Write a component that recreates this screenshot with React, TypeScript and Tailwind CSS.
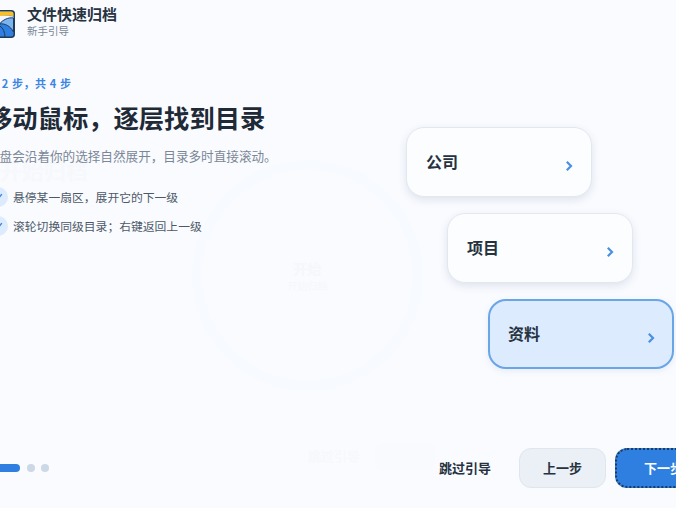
const font = { fontFamily: '"Noto Sans CJK SC", "Noto Sans", sans-serif' };

function Logo() {
  return (
    <svg width="28" height="28" viewBox="0 0 28 28" className="shrink-0">
      <rect x="0.75" y="0.75" width="26.5" height="26.5" rx="3" fill="#2f7fe0" stroke="#1f3b5c" strokeWidth="1.5" />
      <path d="M1.5 9V4a2.5 2.5 0 0 1 2.5-2.5h20A2.5 2.5 0 0 1 26.500 4v2C17 5 8 6 1.500 9z" fill="#fbbf24" />
      <path d="M26.500 6.500v14C22 14 15 11 9 13 6 10 4 9.500 1.500 10V9C8 6 17 5 26.500 6.500z" fill="#f3f7fd" />
      <path d="M26.500 8v14c-3-6-9-9-14-8 3-4 9-7 14-6z" fill="#7db4ee" stroke="#1f3b5c" strokeWidth="1" />
      <path d="M9 27c0-6 1-10 4-13M1.500 16c4-2 8-2 11.500 0 3 2 5 6 5 11" fill="none" stroke="#1f3b5c" strokeWidth="1" />
    </svg>
  );
}

function Chevron() {
  return (
    <svg width="8" height="12" viewBox="0 0 8 12" className="mt-2">
      <path d="M1.800 1.800 6 6l-4.200 4.200" fill="none" stroke="#4a90e2" strokeWidth="2.200" />
    </svg>
  );
}

function Check() {
  return (
    <span className="ml-px w-5 h-5 rounded-full bg-[#dcebfd] flex items-center justify-center shrink-0">
      <svg width="12" height="12" viewBox="0 0 10 10">
        <path d="M2 5.200 4.200 7.400 8.200 2.600" fill="none" stroke="#3b86e3" strokeWidth="1.200" />
      </svg>
    </span>
  );
}

function FolderCard({ label, active, indent }: { label: string; active?: boolean; indent: string }) {
  return (
    <div
      className={`${indent} w-[186px] h-[70px] rounded-[18px] flex items-center justify-between ${
        active
          ? "pl-[18px] pr-[17px] bg-[#dcebfe] border-2 border-[#6aa5e6] shadow-[0_2px_6px_rgba(60,110,170,0.10)]"
          : "pl-[19px] pr-[18px] bg-[#fcfdff] border border-[#e3e8f0] shadow-[0_3px_9px_rgba(40,60,90,0.12)]"
      }`}
    >
      <span className="text-[16px] font-bold text-[#27323f] -mt-0.5">{label}</span>
      <Chevron />
    </div>
  );
}

export default function App() {
  const tips = ["悬停某一扇区，展开它的下一级", "滚轮切换同级目录；右键返回上一级"];

  return (
    <div className="w-[676px] h-[508px] relative overflow-hidden bg-[#f9fbff]" style={font}>
      {/* 上一页淡出时留下的残影 */}
      <div className="absolute left-[192px] top-[160px] w-[231px] h-[231px] rounded-full border-[10px] border-[#f7fafe] flex flex-col items-center justify-center text-[#f6f7fb]">
        <span className="text-[14px] font-bold leading-5">开始</span>
        <span className="text-[10px] leading-4">开始归档</span>
      </div>
      <div className="absolute left-0 top-[155px] text-[22px] leading-7 font-bold text-[#f6f8fc] whitespace-nowrap">开始归档</div>
      <div className="absolute left-[308px] top-[446px] text-[13px] font-bold text-[#f7f8fc]">跳过引导</div>
      <div className="absolute left-[375px] top-[443px] w-[60px] h-[27px] rounded-lg bg-[#f8fafe]"></div>

      <div className="relative w-[725px] h-[508px] -ml-[13px] flex flex-col">
        <header className="h-[46px] flex items-center gap-3 pt-0.5">
          <Logo />
          <div className="flex flex-col -mt-[7px]">
            <span className="text-[15px] leading-[19px] font-bold text-[#27323f]">文件快速归档</span>
            <span className="text-[10.5px] leading-[15px] text-[#7b8796]">新手引导</span>
          </div>
        </header>

        <main className="flex flex-1">
          <div className="w-[419px] pt-[29px] flex flex-col">
            <p className="text-[11px] leading-4 font-bold tracking-[0.6px] text-[#3b86e3]">第 2 步，共 4 步</p>
            <h1 className="text-[25.300px] leading-[36px] font-bold text-[#1f2a37] mt-[8px] whitespace-nowrap">移动鼠标，逐层找到目录</h1>
            <p className="text-[12.600px] leading-5 text-[#7b8796] mt-[11px] whitespace-nowrap">圆盘会沿着你的选择自然展开，目录多时直接滚动。</p>
            <ul className="mt-[21px] flex flex-col gap-[9px]">
              {tips.map((tip) => (
                <li key={tip} className="flex items-center gap-[5px] text-[11.800px] text-[#4d5968] whitespace-nowrap">
                  <Check />
                  <span>{tip}</span>
                </li>
              ))}
            </ul>
          </div>

          <div className="flex flex-col gap-4 pt-[81px]">
            <FolderCard label="公司" indent="ml-0" />
            <FolderCard label="项目" indent="ml-[41px]" />
            <FolderCard label="资料" indent="ml-[82px]" active />
          </div>
        </main>

        <footer className="h-[80px] flex items-center justify-between">
          <div className="flex items-center gap-[6.500px]">
            <span className="w-[33px] h-2 rounded-full bg-[#2f7fe0]"></span>
            <span className="w-2 h-2 rounded-full bg-[#cbd8e6]"></span>
            <span className="w-2 h-2 rounded-full bg-[#cbd8e6]"></span>
          </div>
          <div className="flex items-center">
            <button className="text-[13px] font-bold text-[#27323f] mr-[28px]">跳过引导</button>
            <button className="w-[87px] h-10 rounded-[12px] bg-[#ebf0f7] border border-[#dfe6ef] text-[13px] font-bold text-[#27323f] mr-[9px]">上一步</button>
            <button className="w-[97px] h-10 rounded-[12px] bg-[#2f7fe0] border-2 border-dotted border-[#1c3a5e] text-[13px] font-bold text-white">下一步</button>
          </div>
        </footer>
      </div>
    </div>
  );
}
